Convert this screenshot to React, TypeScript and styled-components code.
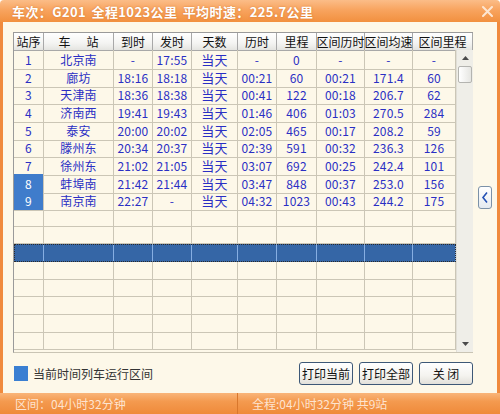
import React from "react";
import styled, { createGlobalStyle } from "styled-components";

const GlobalStyle = createGlobalStyle`
  html, body {
    margin: 0;
    padding: 0;
    background: #ffffff;
  }
  body {
    font-family: "Noto Sans CJK SC", "Noto Sans", sans-serif;
  }
`;

const COLUMNS = "30px 70px 39px 39px 46px 39px 40px 48px 48px 43px";
const HEADER_COLUMNS = "30px 70px 39px 39px 46px 39px 40px 48px 48px 60px";
const ROW_HEIGHT = 17.67;
const ROW_COUNT = 17;

const Window = styled.div`
  width: 500px;
  height: 414px;
  display: flex;
  flex-direction: column;
  background: #fdf8e9;
  border-radius: 4px 4px 0 0;
  overflow: hidden;
`;

const TitleBar = styled.div`
  height: 22px;
  flex: none;
  display: flex;
  align-items: center;
  justify-content: space-between;
  padding: 0 6px 0 12px;
  background: linear-gradient(to bottom, #fbbd88 0%, #f8a45f 45%, #f2903f 100%);
`;

const TitleText = styled.div`
  color: #ffffff;
  font-size: 13px;
  font-weight: 700;
  letter-spacing: 0.4px;
  word-spacing: 2px;
  text-shadow: 0 0 2px rgba(190, 90, 20, 0.6);
`;

const CloseButton = styled.div`
  width: 14px;
  height: 14px;
  display: flex;
  align-items: center;
  justify-content: center;
`;

const Body = styled.div`
  flex: 1;
  display: flex;
  flex-direction: column;
  border-left: 3px solid #f08a3d;
  border-right: 3px solid #f08a3d;
  padding: 10px 0 0 10px;
`;

const Main = styled.div`
  display: flex;
`;

const TableFrame = styled.div`
  width: 459px;
  border-left: 1px solid #9a9a9a;
  border-top: 1px solid #9a9a9a;
  border-bottom: 1px solid #c9c4b4;
`;

const HeaderRow = styled.div`
  display: grid;
  grid-template-columns: ${HEADER_COLUMNS};
  height: 17px;
`;

const HeaderCell = styled.div`
  display: flex;
  align-items: center;
  justify-content: center;
  gap: 16px;
  font-size: 12px;
  color: #111111;
  background: linear-gradient(to bottom, #ffffff 0%, #f4f4f2 60%, #e4e4e0 100%);
  border-right: 1px solid #a8a8a8;
  border-bottom: 1px solid #a8a8a8;
  white-space: nowrap;
`;

const BodyArea = styled.div`
  display: flex;
  height: 302px;
  overflow: hidden;
`;

const Rows = styled.div`
  width: 442px;
  display: flex;
  flex-direction: column;
`;

const Row = styled.div<{ $focus?: boolean }>`
  display: grid;
  grid-template-columns: ${COLUMNS};
  height: ${ROW_HEIGHT}px;
  flex: none;
  box-sizing: border-box;
  background: ${(p) => (p.$focus ? "#3566a6" : "transparent")};
  outline: ${(p) => (p.$focus ? "1px dotted #2a2a2a" : "none")};
  outline-offset: -1px;
`;

const Cell = styled.div<{ $mark?: boolean; $focus?: boolean; $big?: boolean }>`
  display: flex;
  align-items: center;
  justify-content: center;
  box-sizing: border-box;
  font-size: ${(p) => (p.$big ? "13px" : "12px")};
  letter-spacing: 0.2px;
  color: ${(p) => (p.$mark ? "#ffffff" : "#2a2fc4")};
  background: ${(p) => (p.$mark ? "#3f7ccb" : "transparent")};
  border-right: 1px solid ${(p) => (p.$focus ? "#86aee2" : "#cbc6b6")};
  border-bottom: 1px solid ${(p) => (p.$focus ? "transparent" : "#cbc6b6")};
  white-space: nowrap;
`;

const Scrollbar = styled.div`
  width: 17px;
  display: flex;
  flex-direction: column;
  background: #efeee8;
  border-left: 1px solid #e0ded6;
  box-sizing: border-box;
`;

const ScrollArrow = styled.div`
  height: 16px;
  display: flex;
  align-items: center;
  justify-content: center;
`;

const ScrollThumb = styled.div`
  height: 17px;
  margin: 0 1px;
  border: 1px solid #b4b4b0;
  border-radius: 2px;
  background: linear-gradient(to right, #ffffff, #e6e6e2);
  box-sizing: border-box;
`;

const ScrollTrack = styled.div`
  flex: 1;
`;

const Side = styled.div`
  flex: 1;
  display: flex;
  justify-content: center;
  padding-top: 154px;
`;

const CollapseButton = styled.div`
  width: 14px;
  height: 23px;
  box-sizing: border-box;
  border: 1px solid #7b91a8;
  border-radius: 3px;
  background: linear-gradient(to bottom, #ffffff, #e4eaf0);
  display: flex;
  align-items: center;
  justify-content: center;
`;

const Footer = styled.div`
  flex: 1;
  display: flex;
  align-items: center;
  padding: 0 24px 0 1px;
`;

const Legend = styled.div`
  display: flex;
  align-items: center;
  gap: 5px;
  font-size: 12px;
  color: #333333;
`;

const LegendSwatch = styled.div`
  width: 14px;
  height: 15px;
  background: #3a7fd2;
`;

const Buttons = styled.div`
  margin-left: auto;
  display: flex;
  gap: 6px;
`;

const Button = styled.div`
  width: 54px;
  height: 23px;
  box-sizing: border-box;
  display: flex;
  align-items: center;
  justify-content: center;
  font-size: 12px;
  color: #111111;
  border: 1px solid #3d5877;
  border-radius: 3px;
  background: linear-gradient(to bottom, #ffffff 0%, #f4f3ef 60%, #e2e0da 100%);
  white-space: pre;
`;

const StatusBar = styled.div`
  height: 21px;
  flex: none;
  display: flex;
  align-items: center;
  background: linear-gradient(to bottom, #f9b57a 0%, #f49a4f 40%, #ef8a3a 100%);
  color: rgba(255, 236, 222, 0.92);
  font-size: 12px;
`;

const StatusSection = styled.div<{ $width?: number }>`
  width: ${(p) => (p.$width ? `${p.$width}px` : "auto")};
  flex: ${(p) => (p.$width ? "none" : "1")};
  height: 100%;
  display: flex;
  align-items: center;
  padding-left: ${(p) => (p.$width ? "15px" : "14px")};
  box-sizing: border-box;
  border-right: ${(p) => (p.$width ? "1px solid #d9772c" : "none")};
`;

const headers = ["站序", "车站", "到时", "发时", "天数", "历时", "里程", "区间历时", "区间均速", "区间里程"];

const stops: string[][] = [
  ["1", "北京南", "-", "17:55", "当天", "-", "0", "-", "-", "-"],
  ["2", "廊坊", "18:16", "18:18", "当天", "00:21", "60", "00:21", "171.4", "60"],
  ["3", "天津南", "18:36", "18:38", "当天", "00:41", "122", "00:18", "206.7", "62"],
  ["4", "济南西", "19:41", "19:43", "当天", "01:46", "406", "01:03", "270.5", "284"],
  ["5", "泰安", "20:00", "20:02", "当天", "02:05", "465", "00:17", "208.2", "59"],
  ["6", "滕州东", "20:34", "20:37", "当天", "02:39", "591", "00:32", "236.3", "126"],
  ["7", "徐州东", "21:02", "21:05", "当天", "03:07", "692", "00:25", "242.4", "101"],
  ["8", "蚌埠南", "21:42", "21:44", "当天", "03:47", "848", "00:37", "253.0", "156"],
  ["9", "南京南", "22:27", "-", "当天", "04:32", "1023", "00:43", "244.2", "175"],
];

// stations between which the train is running right now
const runningStops = [7, 8];
const focusRow = 11;

function App() {
  const rows = Array.from({ length: ROW_COUNT }, (_, i) => stops[i] ?? null);

  return (
    <>
      <GlobalStyle />
      <Window>
        <TitleBar>
          <TitleText>车次：G201 全程1023公里 平均时速：225.7公里</TitleText>
          <CloseButton>
            <svg width="11" height="11" viewBox="0 0 11 11">
              <path d="M1 1 L10 10 M10 1 L1 10" stroke="#fde6d2" strokeWidth="2" strokeLinecap="round" />
            </svg>
          </CloseButton>
        </TitleBar>
        <Body>
          <Main>
            <TableFrame>
              <HeaderRow>
                {headers.map((h) =>
                  h === "车站" ? (
                    <HeaderCell key={h}>
                      <span>车</span>
                      <span>站</span>
                    </HeaderCell>
                  ) : (
                    <HeaderCell key={h}>{h}</HeaderCell>
                  )
                )}
              </HeaderRow>
              <BodyArea>
                <Rows>
                  {rows.map((r, i) => (
                    <Row key={i} $focus={i === focusRow}>
                      {Array.from({ length: 10 }, (_, c) => (
                        <Cell
                          key={c}
                          $focus={i === focusRow}
                          $mark={c === 0 && runningStops.includes(i)}
                          $big={c === 4}
                        >
                          {r ? r[c] : ""}
                        </Cell>
                      ))}
                    </Row>
                  ))}
                </Rows>
                <Scrollbar>
                  <ScrollArrow>
                    <svg width="7" height="4" viewBox="0 0 7 4">
                      <path d="M0 4 L3.5 0 L7 4 Z" fill="#4a4a4a" />
                    </svg>
                  </ScrollArrow>
                  <ScrollThumb />
                  <ScrollTrack />
                  <ScrollArrow>
                    <svg width="7" height="4" viewBox="0 0 7 4">
                      <path d="M0 0 L3.5 4 L7 0 Z" fill="#4a4a4a" />
                    </svg>
                  </ScrollArrow>
                </Scrollbar>
              </BodyArea>
            </TableFrame>
            <Side>
              <CollapseButton>
                <svg width="8" height="13" viewBox="0 0 8 13">
                  <path d="M6 1.5 L2 6.5 L6 11.5" fill="none" stroke="#2451b5" strokeWidth="1.6" />
                </svg>
              </CollapseButton>
            </Side>
          </Main>
          <Footer>
            <Legend>
              <LegendSwatch />
              当前时间列车运行区间
            </Legend>
            <Buttons>
              <Button>打印当前</Button>
              <Button>打印全部</Button>
              <Button>关 闭</Button>
            </Buttons>
          </Footer>
        </Body>
        <StatusBar>
          <StatusSection $width={238}>区间：04小时32分钟</StatusSection>
          <StatusSection>全程:04小时32分钟 共9站</StatusSection>
        </StatusBar>
      </Window>
    </>
  );
}

export default App;
